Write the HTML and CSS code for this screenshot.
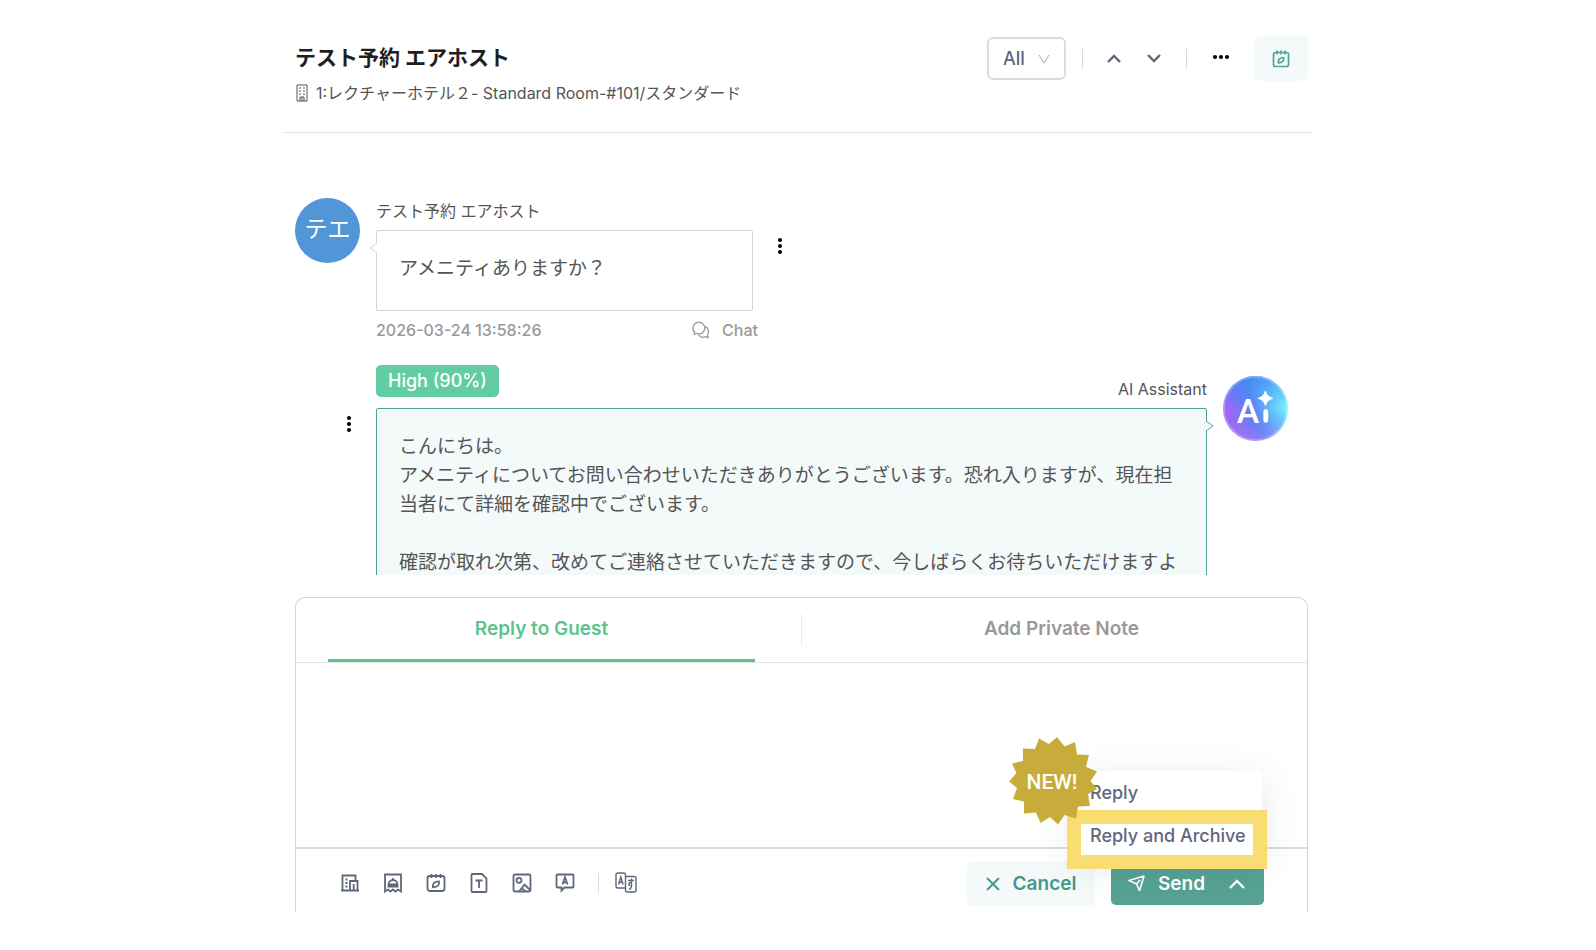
FILE: index.html
```html
<!DOCTYPE html>
<html lang="ja">
<head>
  <meta charset="UTF-8" />
  <meta name="viewport" content="width=device-width, initial-scale=1" />
  <title>テスト予約 エアホスト</title>
  <link rel="stylesheet" href="styles.css">
</head>
<body>
  <div class="app">
    <header class="header">
      <div>
        <h1>テスト予約 エアホスト</h1>
        <p class="room">
          <svg width="12" height="18" viewBox="0 0 12 18" fill="none" stroke="currentColor"><path d="M1 1h10v16H1zM4 17v-4h4v4M6 13v4M3 4h2M7 4h2M3 7h2M7 7h2M3 10h2M7 10h2"/></svg>
          <span>1:レクチャーホテル２- Standard Room-#101/スタンダード</span>
        </p>
      </div>
      <div class="header-actions">
        <div class="filter">
          <select aria-label="Filter"><option>All</option></select>
          <svg width="12" height="10" viewBox="0 0 12 10" fill="none" stroke="#a8a8a8"><path d="M1 1l5 8 5-8"/></svg>
        </div>
        <span class="divider"></span>
        <button class="nav-btn" aria-label="Previous"><svg width="14" height="9" viewBox="0 0 14 9" fill="none" stroke="currentColor" stroke-width="2.4"><path d="M1 8l6-6 6 6"/></svg></button>
        <button class="nav-btn" aria-label="Next"><svg width="14" height="9" viewBox="0 0 14 9" fill="none" stroke="currentColor" stroke-width="2.4"><path d="M1 1l6 6 6-6"/></svg></button>
        <span class="divider"></span>
        <button class="more-btn" aria-label="More"><svg width="18" height="6" viewBox="0 0 18 6"><circle cx="3" cy="3" r="2.1"/><circle cx="9" cy="3" r="2.1"/><circle cx="15" cy="3" r="2.1"/></svg></button>
        <button class="calendar-btn" aria-label="Reservation">
          <svg width="18" height="18" viewBox="0 0 18 18" fill="none" stroke="currentColor" stroke-width="1.7"><rect x="1.5" y="2.5" width="15" height="14" rx="2"/><path d="M5 .5v4M9 .5v4M13 .5v4"/><path d="M6.500 13c-.9-3.200 1.300-5.500 5-5.500.9 3.200-1.300 5.500-5 5.500z"/></svg>
        </button>
      </div>
    </header>

    <main class="thread">
      <div class="message guest">
        <div class="avatar">テエ</div>
        <div class="guest-body">
          <div class="sender">テスト予約 エアホスト</div>
          <div class="bubble">
            <svg class="tail" width="8" height="12" viewBox="0 0 8 12"><path d="M8 1L1 6l7 5" fill="#fff" stroke="#d9d9d9"/></svg>
            アメニティありますか？
          </div>
          <div class="meta">
            <span>2026-03-24 13:58:26</span>
            <span class="channel">
              <svg width="18" height="18" viewBox="0 0 18 18" fill="none" stroke="currentColor" stroke-width="1.3"><path d="M2.200 13.500l.3-2.500A5.900 5.900 0 1 1 7 12.900c-1 0-1.800-.2-2.500-.5zM13.200 5.700c3.300 1.500 4.200 5 2.400 7.600l.6 3.200-2.900-.8c-2.600 1.200-5.300.3-6.700-1.900"/></svg>
              Chat
            </span>
          </div>
        </div>
        <button class="dots" aria-label="Message menu"><svg width="6" height="18" viewBox="0 0 6 18"><circle cx="3" cy="3" r="2"/><circle cx="3" cy="9" r="2"/><circle cx="3" cy="15" r="2"/></svg></button>
      </div>

      <div class="message assistant">
        <button class="dots" aria-label="Message menu"><svg width="6" height="18" viewBox="0 0 6 18"><circle cx="3" cy="3" r="2"/><circle cx="3" cy="9" r="2"/><circle cx="3" cy="15" r="2"/></svg></button>
        <div class="assistant-body">
          <div class="assistant-head">
            <span class="tag">High (90%)</span>
            <span class="sender">AI Assistant</span>
          </div>
          <div class="bubble">
            <svg class="tail" width="8" height="12" viewBox="0 0 8 12"><path d="M0 1l7 5-7 5" fill="#f4fafa" stroke="#4fa396"/></svg>
            <p>こんにちは。</p>
            <p>アメニティについてお問い合わせいただきありがとうございます。恐れ入りますが、現在担当者にて詳細を確認中でございます。</p>
            <p><br></p>
            <p>確認が取れ次第、改めてご連絡させていただきますので、今しばらくお待ちいただけますよ</p>
          </div>
        </div>
        <svg class="ai-avatar" width="65" height="65" viewBox="0 0 65 65">
          <defs>
            <linearGradient id="ai-fill" x1=".15" y1=".75" x2=".95" y2=".45">
              <stop offset="0" stop-color="#a463f5"/>
              <stop offset=".45" stop-color="#5b84f5"/>
              <stop offset="1" stop-color="#74f4ff"/>
            </linearGradient>
            <linearGradient id="ai-top" x1="0" y1="0" x2="0" y2="1">
              <stop offset="0" stop-color="#3f86f4" stop-opacity=".8"/>
              <stop offset=".5" stop-color="#3f86f4" stop-opacity="0"/>
              <stop offset="1" stop-color="#b97cf8" stop-opacity=".5"/>
            </linearGradient>
          </defs>
          <circle cx="32.500" cy="32.500" r="32.500" fill="url(#ai-fill)"/>
          <circle cx="32.500" cy="32.500" r="32.500" fill="url(#ai-top)"/>
          <circle cx="32.500" cy="32.500" r="31.500" fill="none" stroke="#fff" stroke-opacity=".25" stroke-width="2"/>
          <text x="25" y="46.500" text-anchor="middle" class="ai-letter">A</text>
          <path d="M42.800 35.700v8.600" stroke="#fff" stroke-width="4.800" stroke-linecap="round"/>
          <path d="M42.400 15q1.500 5.900 7.300 7.300-5.800 1.500-7.300 7.300-1.500-5.800-7.300-7.300 5.800-1.400 7.300-7.300z" fill="#fff" stroke="#fff" stroke-linejoin="round"/>
        </svg>
      </div>
    </main>

    <section class="composer">
      <div class="tabs" role="tablist">
        <button class="tab active" role="tab" aria-selected="true">Reply to Guest</button>
        <span class="tab-divider"></span>
        <button class="tab" role="tab" aria-selected="false">Add Private Note</button>
      </div>
      <textarea aria-label="Message"></textarea>
      <div class="toolbar">
        <div class="tools">
          <button class="tool" aria-label="Property"><svg width="20" height="20" viewBox="0 0 20 20"><path d="M1 17.500h18M2.500 17.500v-15h13v5M10 17.500v-9.500h7.500v9.500M13.700 17.500v-6.500"/><path d="M5.500 6.500h2M5.500 10h2M5.500 13.500h2"/></svg></button>
          <button class="tool" aria-label="Services"><svg width="20" height="20" viewBox="0 0 20 20"><path d="M2 18.500v-17h16v17l-3-2-2.500 2-2.500-2-2.500 2-2.500-2z"/><path d="M5.500 11.500a4.500 4.500 0 0 1 9 0zM4.500 13.500h11M10 5v2"/></svg></button>
          <button class="tool" aria-label="Calendar"><svg width="20" height="20" viewBox="0 0 20 20"><rect x="1.500" y="3" width="17" height="15" rx="2.500"/><path d="M5.500 1v4M10 1v4M14.500 1v4"/><path d="M7 14.300c-.8-3.800 1.700-6 6-6 .8 3.800-1.700 6-6 6z"/></svg></button>
          <button class="tool" aria-label="Template"><svg width="20" height="20" viewBox="0 0 20 20"><path d="M3.500 1h9.500l4.500 4.500v12.500q0 1-1 1h-13q-1 0-1-1V2q0-1 1-1z"/><path d="M6.500 7.500h7M10 7.500v7.500"/></svg></button>
          <button class="tool" aria-label="Image"><svg width="20" height="20" viewBox="0 0 20 20"><rect x="1.500" y="1.500" width="17" height="17" rx="1.500"/><circle cx="7" cy="7.300" r="2.500"/><path d="M7 18.500l5.500-7 6 6M10 15.500l3.500 3"/></svg></button>
          <button class="tool" aria-label="AI reply"><svg width="20" height="20" viewBox="0 0 20 20"><path d="M2.500 1.500h15q1 0 1 1v11q0 1-1 1h-8L6.500 17.500v-3h-4q-1 0-1-1v-11q0-1 1-1z"/><path d="M7.500 11.500l2.500-7.500 2.500 7.500M8.300 9.300h3.400"/></svg></button>
          <span class="divider"></span>
          <button class="tool translate" aria-label="Translate"><svg width="22" height="22" viewBox="0 0 22 22"><path d="M10.500 4V3q0-2-2-2H3Q1 1 1 3v11q0 2 2 2h7"/><path d="M10.500 4.500h8.500q2 0 2 2V18q0 2-2 2h-6.500q-2 0-2-2z"/><path d="M3.500 12.500l2.300-7.500 2.300 7.500M4.300 10.300h3M13 8.500h6M16.500 6.500v7c0 2.500-.7 3.500-2.500 4M16.500 11c-3-1.500-3.500 2.500-1.300 2.500"/></svg></button>
        </div>
        <div class="actions">
          <button class="cancel"><svg width="14" height="14" viewBox="0 0 14 14" fill="none" stroke="currentColor" stroke-width="1.900"><path d="M1 1l12 12M13 1L1 13"/></svg>Cancel</button>
          <div class="send-group">
            <button class="send"><svg width="17" height="17" viewBox="0 0 17 17" fill="none" stroke="currentColor" stroke-width="1.700" stroke-linejoin="round"><path d="M1 5.500L16 1l-4.500 14.500-3-6.500zM8.500 9l3.500-4"/></svg>Send</button>
            <button class="send-more" aria-label="Send options"><svg width="16" height="10" viewBox="0 0 16 10" fill="none" stroke="currentColor" stroke-width="2.400"><path d="M1 9l7-7 7 7"/></svg></button>
            <div class="menu">
              <button class="menu-item">Reply</button>
              <button class="menu-item featured">Reply and Archive</button>
              <svg class="new-badge" width="88" height="88" viewBox="0 0 88 88">
                <path fill="#c7ac3b" d="M48 0l7.500 9.500L66 5l2 12.500 12 .5-3 12 11 4.500-6.500 9.500L88 52l-9 5 2 12-12 .5-2 12-11.500-3.500L49 87.500l-8-7.500-9.500 6-4.500-10.500-12 1V64.500L4 62l4-11-8-6.500 7.500-8.500L3 26.500l11-2.500V11.500l12 .5 4-10.500 10 5.500z"/>
                <text x="43" y="52" text-anchor="middle" class="badge-text">NEW!</text>
              </svg>
            </div>
          </div>
        </div>
      </div>
    </section>
  </div>
</body>
</html>
```

FILE: styles.css
```css
* {
  box-sizing: border-box;
}

body {
  margin: 0;
  background: #fff;
  color: #555;
  font-family: Inter, "Noto Sans CJK JP", sans-serif;
  font-size: 16px;
}

button {
  margin: 0;
  padding: 0;
  border: 0;
  background: none;
  font-family: inherit;
  cursor: pointer;
}

button,
.filter,
.channel,
.room {
  display: flex;
  align-items: center;
}

button {
  justify-content: center;
}

h1,
p {
  margin: 0;
}

.app {
  display: flex;
  flex-direction: column;
  max-width: 1030px;
  height: 100vh;
  margin: 0 auto;
  padding-bottom: 38px;
}

/* header */
.header {
  display: flex;
  justify-content: space-between;
  align-items: flex-start;
  height: 133px;
  padding: 36px 5px 0 12px;
  border-bottom: 1px solid #e0e0e0;
}

.header h1 {
  color: #1f1f1f;
  font-size: 21px;
  font-weight: 700;
  line-height: 44px;
}

.room {
  gap: 8px;
  padding-left: 1px;
  line-height: 26px;
}

.header-actions {
  display: flex;
  align-items: center;
  color: #5f677b;
}

.filter {
  position: relative;
}

.filter select {
  width: 79px;
  height: 43px;
  padding: 0 14px;
  border: 2px solid #dcdcdc;
  border-radius: 6px;
  background: #fff;
  color: #5f677b;
  font-family: inherit;
  font-size: 18px;
  font-weight: 500;
  appearance: none;
}

.filter svg {
  position: absolute;
  right: 16px;
  pointer-events: none;
}

.divider {
  width: 1px;
  height: 20px;
  background: #d9d9d9;
}

.header .divider {
  margin: 0 11px 0 16px;
}

.nav-btn {
  width: 40px;
  height: 40px;
  color: #5f677b;
}

.header .nav-btn + .divider {
  margin: 0 14px 0 12px;
}

.more-btn {
  width: 40px;
  height: 40px;
  padding-bottom: 4px;
}

.calendar-btn {
  width: 54px;
  height: 45px;
  margin-left: 13px;
  border-radius: 6px;
  background: #f4fafa;
  color: #4fa396;
}

/* conversation */
.thread {
  flex: 1;
  min-height: 0;
  padding: 65px 25px 0 12px;
  overflow: hidden;
}

.message {
  display: flex;
  align-items: flex-start;
}

.avatar {
  width: 65px;
  height: 65px;
  margin-right: 16px;
  border-radius: 50%;
  background: #5196d7;
  color: #fff;
  font-size: 23px;
  line-height: 63px;
  text-align: center;
}

.guest-body {
  width: 382px;
}

.sender {
  line-height: 26px;
}

.bubble {
  position: relative;
  margin-top: 6px;
  padding: 23px 22px 27px;
  border: 1px solid #d4d4d4;
  border-radius: 2px;
  font-size: 19px;
  line-height: 29px;
}

.guest .bubble {
  margin-right: 5px;
}

.tail {
  position: absolute;
  top: 11px;
  left: -8px;
}

.meta {
  display: flex;
  justify-content: space-between;
  margin-top: 7px;
  color: #999;
  font-weight: 500;
  line-height: 24px;
}

.channel {
  gap: 12px;
}

.dots {
  width: 20px;
  height: 24px;
}

.guest .dots {
  margin: 36px 0 0 12px;
}

.assistant {
  margin-top: 23px;
}

.assistant .dots {
  margin: 47px 17px 0 44px;
}

.assistant-body {
  flex: 1;
}

.assistant-head {
  display: flex;
  justify-content: space-between;
  align-items: flex-start;
}

.assistant-head .sender {
  margin-top: 11px;
}

.tag {
  padding: 0 12px;
  border-radius: 5px;
  background: #62cda2;
  color: #fff;
  font-size: 18px;
  font-weight: 500;
  line-height: 32px;
}

.assistant .bubble {
  border-color: #4fa396;
  background: #f4fafa;
}

.assistant .tail {
  right: -8px;
  left: auto;
}

.ai-avatar {
  flex: none;
  margin: 11px 0 0 16px;
}

.ai-letter {
  fill: #fff;
  font-family: Roboto, sans-serif;
  font-size: 34px;
  font-weight: 500;
}

/* reply box */
.composer {
  margin: 22px 5px 0 12px;
  border: 1px solid #d4d4d4;
  border-bottom: 0;
  border-radius: 10px 10px 0 0;
}

.tabs {
  display: flex;
  align-items: center;
  gap: 46px;
  height: 65px;
  padding: 0 32px;
  border-bottom: 1px solid #e4e4e4;
}

.tab {
  flex: 1;
  height: 64px;
  border-bottom: 3px solid transparent;
  color: #999;
  font-size: 19px;
  font-weight: 600;
}

.tab.active {
  border-bottom-color: #5cc48b;
  color: #5cc48b;
}

.tab-divider {
  width: 1px;
  height: 32px;
  background: #e8e8e8;
}

.composer textarea {
  display: block;
  width: 100%;
  height: 184px;
  padding: 16px 32px;
  border: 0;
  outline: 0;
  background: none;
  font: inherit;
  resize: none;
}

.toolbar {
  display: flex;
  justify-content: space-between;
  align-items: center;
  height: 65px;
  padding: 6px 43px 0 32px;
  border-top: 2px solid #dcdcdc;
}

.tools,
.actions {
  display: flex;
  align-items: center;
}

.tools {
  padding-bottom: 2px;
}

.tool {
  width: 43px;
  height: 40px;
  color: #5f677b;
}

.tool svg {
  fill: none;
  stroke: currentColor;
  stroke-width: 1.8;
}

.translate svg {
  stroke-width: 1.4;
}

.tools .divider {
  margin: 0 5px 0 12px;
}

.actions {
  gap: 16px;
}

.cancel,
.send {
  gap: 13px;
  font-size: 19px;
  font-weight: 600;
}

.cancel {
  width: 128px;
  height: 45px;
  border-radius: 6px;
  background: #f4fafa;
  color: #43998a;
}

.send-group {
  display: flex;
  position: relative;
  border-radius: 5px;
  background: #57a293;
}

.send {
  width: 105px;
  height: 43px;
  padding-left: 6px;
  color: #fff;
}

.send-more {
  width: 48px;
  height: 43px;
  padding-right: 6px;
  color: #fff;
}

/* menu above the send button */
.menu {
  position: absolute;
  right: 2px;
  bottom: 48px;
  width: 187px;
  border-radius: 4px;
  background: #fff;
  box-shadow: 0 8px 40px rgba(0, 0, 0, 0.1);
}

.menu-item {
  justify-content: flex-start;
  position: relative;
  width: 100%;
  height: 43px;
  padding-left: 15px;
  color: #5f677b;
  font-size: 18px;
  font-weight: 500;
  white-space: nowrap;
}

.featured::before {
  content: "";
  position: absolute;
  top: -4px;
  right: -5px;
  bottom: -12px;
  left: -8px;
  border: 14px solid #fadd70;
}

.new-badge {
  position: absolute;
  top: -34px;
  left: -66px;
}

.badge-text {
  fill: #fff;
  font-family: Roboto, sans-serif;
  font-size: 21px;
  font-weight: 500;
}
```
